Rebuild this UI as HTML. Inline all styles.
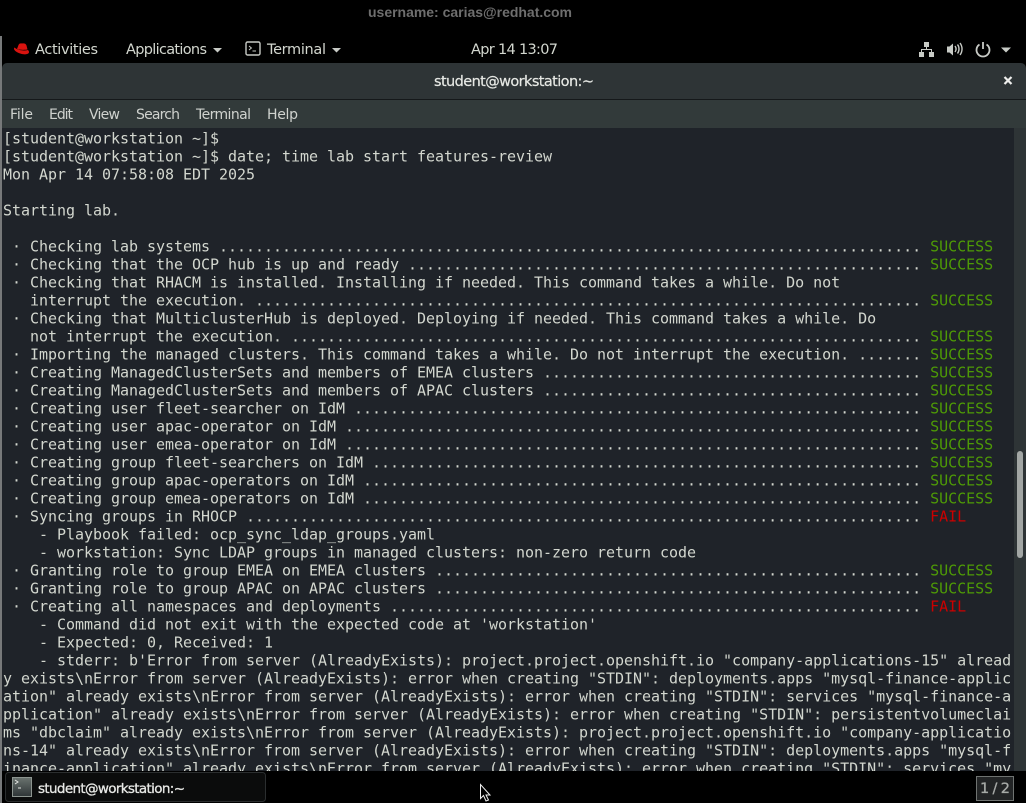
<!DOCTYPE html>
<html><head><meta charset="utf-8"><title>Terminal</title>
<style>
html,body{margin:0;padding:0;background:#000;width:1026px;height:803px;overflow:hidden}
#root{position:relative;width:1026px;height:803px;overflow:hidden;background:#000}
#strip{position:absolute;left:0;top:36px;width:2px;height:767px;background:#77797a}
#win{position:absolute;left:2px;top:63px;width:1024px;height:708px;background:#2e3436;border-radius:5px 5px 0 0}
#tbline{position:absolute;left:2px;top:99px;width:1024px;height:1px;background:#15181a}
#menu{position:absolute;left:2px;top:100px;width:1024px;height:28px;background:#323a3a}
#term{position:absolute;left:2px;top:128px;width:1012px;height:643px;background:#1f2329;overflow:hidden}
#term pre{margin:0;position:absolute;left:1px;top:1px;transform:translateY(0.5px);filter:blur(0.25px);font:15px/18px "DejaVu Sans Mono",monospace;color:#d3d7cf;letter-spacing:-0.03px;white-space:pre}
.s{color:#4e9a06}.f{color:#cc0000}
#sb{position:absolute;left:1014px;top:128px;width:12px;height:643px;background:#2e3436}
#thumb{position:absolute;left:3px;top:323px;width:6px;height:107px;border-radius:3px;background:#a2a6a4}
svg{position:absolute;left:0;top:0}
svg text{font-family:"DejaVu Sans",sans-serif}
</style></head><body><div id="root">
<div id="strip"></div><div id="win"></div><div id="tbline"></div><div id="menu"></div>
<div id="term"><pre>[student@workstation ~]$
[student@workstation ~]$ date; time lab start features-review
Mon Apr 14 07:58:08 EDT 2025

Starting lab.

 · Checking lab systems .............................................................................. <span class="s">SUCCESS</span>
 · Checking that the OCP hub is up and ready ......................................................... <span class="s">SUCCESS</span>
 · Checking that RHACM is installed. Installing if needed. This command takes a while. Do not
   interrupt the execution. .......................................................................... <span class="s">SUCCESS</span>
 · Checking that MulticlusterHub is deployed. Deploying if needed. This command takes a while. Do
   not interrupt the execution. ...................................................................... <span class="s">SUCCESS</span>
 · Importing the managed clusters. This command takes a while. Do not interrupt the execution. ....... <span class="s">SUCCESS</span>
 · Creating ManagedClusterSets and members of EMEA clusters .......................................... <span class="s">SUCCESS</span>
 · Creating ManagedClusterSets and members of APAC clusters .......................................... <span class="s">SUCCESS</span>
 · Creating user fleet-searcher on IdM ............................................................... <span class="s">SUCCESS</span>
 · Creating user apac-operator on IdM ................................................................ <span class="s">SUCCESS</span>
 · Creating user emea-operator on IdM ................................................................ <span class="s">SUCCESS</span>
 · Creating group fleet-searchers on IdM ............................................................. <span class="s">SUCCESS</span>
 · Creating group apac-operators on IdM .............................................................. <span class="s">SUCCESS</span>
 · Creating group emea-operators on IdM .............................................................. <span class="s">SUCCESS</span>
 · Syncing groups in RHOCP ........................................................................... <span class="f">FAIL</span>
    - Playbook failed: ocp_sync_ldap_groups.yaml
    - workstation: Sync LDAP groups in managed clusters: non-zero return code
 · Granting role to group EMEA on EMEA clusters ...................................................... <span class="s">SUCCESS</span>
 · Granting role to group APAC on APAC clusters ...................................................... <span class="s">SUCCESS</span>
 · Creating all namespaces and deployments ........................................................... <span class="f">FAIL</span>
    - Command did not exit with the expected code at 'workstation'
    - Expected: 0, Received: 1
    - stderr: b'Error from server (AlreadyExists): project.project.openshift.io "company-applications-15" alread
y exists\nError from server (AlreadyExists): error when creating "STDIN": deployments.apps "mysql-finance-applic
ation" already exists\nError from server (AlreadyExists): error when creating "STDIN": services "mysql-finance-a
pplication" already exists\nError from server (AlreadyExists): error when creating "STDIN": persistentvolumeclai
ms "dbclaim" already exists\nError from server (AlreadyExists): project.project.openshift.io "company-applicatio
ns-14" already exists\nError from server (AlreadyExists): error when creating "STDIN": deployments.apps "mysql-f
inance-application" already exists\nError from server (AlreadyExists): error when creating "STDIN": services "my</pre></div>
<div id="sb"><div id="thumb"></div></div>
<svg width="1026" height="803" viewBox="0 0 1026 803">
<defs><linearGradient id="ig" x1="0" y1="0" x2="0" y2="1"><stop offset="0" stop-color="#6a736f"/><stop offset="1" stop-color="#2e3436"/></linearGradient></defs>
<text x="368" y="17" font-size="14" font-weight="bold" fill="#6e6e6e" style="font-family:'Liberation Sans',sans-serif" textLength="204">username: carias@redhat.com</text>
<!-- redhat logo -->
<path d="M17 49L18.500 45C19 43.500 20.500 43 22 43.500C24 43 26 43.500 26.500 45.500L27.500 49.500C25 50 19 50 17 49z" fill="#d9130f"/>
<path d="M14.500 47.500C13.500 48.500 14 50 16 51.500C19 53.500 24 55 27 54C29.500 53.500 29.500 51.500 28 50C24 51 18 50.500 14.500 47.500z" fill="#d9130f"/>
<g fill="#d3d7cf" font-size="14.5">
<text x="35" y="54" textLength="63">Activities</text>
<text x="126" y="54" textLength="81">Applications</text>
<text x="267" y="54" textLength="59">Terminal</text>
<text x="471" y="54" textLength="87">Apr 14  13:07</text>
</g>
<path d="M213 48h9l-4.500 4.500zM332 48h9l-4.500 4.500zM1001 47.500h10l-5 5z" fill="#c8cbc6"/>
<!-- terminal panel icon -->
<rect x="246" y="42" width="14" height="13" rx="1.500" fill="none" stroke="#c8cbc6" stroke-width="1.400"/>
<path d="M249 46l2.400 2-2.400 2" fill="none" stroke="#c8cbc6" stroke-width="1"/><path d="M252.500 51h3.500" stroke="#c8cbc6" stroke-width="1"/>
<!-- network -->
<g fill="#c8cbc6"><rect x="924" y="42" width="5" height="5"/><rect x="919" y="52" width="5" height="5"/><rect x="929" y="52" width="5" height="5"/>
<path d="M926 47h1v2h5v3h-1v-2h-9v2h-1v-3h5z"/></g>
<!-- volume -->
<path d="M947 46.500h2.500l3.500-3v12l-3.500-3h-2.500z" fill="#c8cbc6"/>
<g fill="none" stroke="#c8cbc6" stroke-width="1.400"><path d="M955 46c1.300 1.800 1.300 4.200 0 6"/><path d="M957.500 44.500c2 2.700 2 6.300 0 9"/><path d="M960 43c2.700 3.600 2.700 8.400 0 12"/></g>
<!-- power -->
<path d="M979.500 44.500a6.500 6.500 0 1 0 7 0" fill="none" stroke="#c8cbc6" stroke-width="1.800"/><path d="M983 42v7" stroke="#c8cbc6" stroke-width="1.800"/>
<!-- title -->
<text x="434" y="86" font-size="14.500" fill="#e6e8e4" stroke="#e6e8e4" stroke-width="0.2" textLength="160">student@workstation:~</text>
<path d="M1004.500 77l7 7m0-7l-7 7" stroke="#eeeeec" stroke-width="2.200" fill="none"/>
<!-- menu -->
<g fill="#cfd2ce" font-size="14">
<text x="10" y="119" textLength="23">File</text>
<text x="49" y="119" textLength="24">Edit</text>
<text x="89" y="119" textLength="31">View</text>
<text x="136" y="119" textLength="44">Search</text>
<text x="196" y="119" textLength="55">Terminal</text>
<text x="267" y="119" textLength="31">Help</text>
</g>
<!-- taskbar -->
<rect x="0" y="771" width="1026" height="32" fill="#000"/>
<rect x="0" y="771" width="2" height="32" fill="#77797a"/>
<rect x="5.500" y="772.500" width="260" height="29" rx="3" fill="#0b0c0c" stroke="#2b2e2f"/>
<rect x="12.500" y="777.500" width="19" height="19" fill="url(#ig)" stroke="#8d9590"/>
<path d="M15 780l3 2-3 2M18 788h3" stroke="#e4e5e2" fill="none"/>
<text x="38" y="793" font-size="13.500" fill="#e8e9e6" stroke="#e8e9e6" stroke-width="0.3" textLength="147">student@workstation:~</text>
<rect x="976.500" y="776.500" width="37" height="24" fill="#222425" stroke="#6f7371"/>
<text x="980" y="793" font-size="14.500" fill="#a7aaa7" stroke="#a7aaa7" stroke-width="0.3" textLength="30">1 / 2</text>
<!-- cursor -->
<path d="M480.500 784.500v14l3-3 2.500 5.500 2.500-1-2.500-5h4z" fill="#000" stroke="#eee" stroke-width="1"/>
</svg>
</div></body></html>
